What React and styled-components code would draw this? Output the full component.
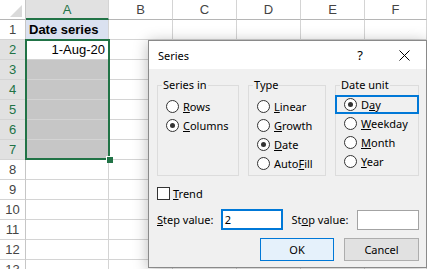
import React from 'react';
import styled, { createGlobalStyle, css } from 'styled-components';

const GlobalStyle = createGlobalStyle`
  html, body { margin: 0; padding: 0; background: #fff; }
  body { font-family: "Liberation Sans", Arial, sans-serif; overflow: hidden; }
  * { box-sizing: border-box; }
`;

const GREEN = '#217346';
const GRID = '#d4d4d4';

const Page = styled.div`
  position: relative;
  width: 427px;
  height: 269px;
  overflow: hidden;
  background: #fff;
`;

const Sheet = styled.div`
  display: grid;
  grid-template-columns: 26px 83px 64px 64px 64px 64px 62px;
  grid-template-rows: repeat(14, 20px);
  font-family: "Liberation Sans", Arial, sans-serif;
  font-size: 13px;
`;

const Corner = styled.div`
  border-right: 1px solid #c6c6c6;
  border-bottom: 1px solid #b5b5b5;
  display: flex;
  align-items: flex-end;
  justify-content: flex-end;
  padding: 0 3px 2px 0;
`;

const ColHead = styled.div`
  display: flex;
  align-items: center;
  justify-content: center;
  color: #444;
  background: #fff;
  border-right: 1px solid ${GRID};
  border-bottom: 1px solid #b5b5b5;
  ${(p) =>
    p.$selected &&
    css`
      background: #e1e1e1;
      color: ${GREEN};
      border-bottom: 2px solid ${GREEN};
      padding-top: 1px;
    `}
`;

const RowHead = styled.div`
  display: flex;
  align-items: center;
  justify-content: center;
  color: #444;
  background: #fff;
  border-right: 1px solid #c6c6c6;
  border-bottom: 1px solid ${GRID};
  ${(p) =>
    p.$selected &&
    css`
      background: #e1e1e1;
      color: ${GREEN};
    `}
`;

const Cell = styled.div`
  display: flex;
  align-items: center;
  justify-content: ${(p) => (p.$align === 'right' ? 'flex-end' : 'flex-start')};
  padding: 0 3px;
  white-space: nowrap;
  overflow: visible;
  color: #000;
  font-weight: ${(p) => (p.$bold ? 700 : 400)};
  background: ${(p) => p.$bg || '#fff'};
  border-right: 1px solid ${GRID};
  border-bottom: 1px solid ${GRID};
`;

const Selection = styled.div`
  position: absolute;
  left: 25px;
  top: 39px;
  width: 85px;
  height: 121px;
  border: 2px solid ${GREEN};
  pointer-events: none;
`;

const FillHandle = styled.div`
  position: absolute;
  right: -5px;
  bottom: -5px;
  width: 7px;
  height: 7px;
  background: ${GREEN};
  border-left: 1px solid #fff;
  border-top: 1px solid #fff;
`;

/* ---------- Dialog ---------- */

const Dialog = styled.div`
  position: absolute;
  left: 148px;
  top: 40px;
  width: 279px;
  height: 228px;
  border: 1px solid #8a8a8a;
  background: #f0f0f0;
  box-shadow: 0 2px 14px rgba(0, 0, 0, 0.28);
  display: flex;
  flex-direction: column;
  font-family: "Noto Sans", "Open Sans", sans-serif;
  font-size: 11px;
  color: #000;
`;

const TitleBar = styled.div`
  height: 28px;
  background: #fff;
  display: flex;
  align-items: center;
  padding-left: 9px;
  flex-shrink: 0;
`;

const Title = styled.span`
  flex: 1;
  font-size: 11px;
`;

const TitleButton = styled.span`
  width: 44px;
  height: 28px;
  display: flex;
  align-items: center;
  justify-content: center;
  font-size: 13px;
`;

const Body = styled.div`
  flex: 1;
  display: flex;
  flex-direction: column;
  padding: 0 7px 0 8px;
`;

const GroupsRow = styled.div`
  display: flex;
  gap: 9px;
  margin-top: 16px;
`;

const Group = styled.div`
  position: relative;
  width: ${(p) => p.$w}px;
  height: 91px;
  border: 1px solid #dcdcdc;
  padding-top: ${(p) => p.$pt}px;
  display: flex;
  flex-direction: column;
`;

const Legend = styled.span`
  position: absolute;
  top: -9px;
  left: 4px;
  padding: 0 1px;
  line-height: 16px;
  background: #f0f0f0;
`;

const OptionRow = styled.div`
  height: 19px;
  display: flex;
  align-items: center;
  gap: 4px;
  padding-left: 8px;
  white-space: nowrap;
  ${(p) =>
    p.$focused &&
    css`
      margin: 0 -1px;
      border: 2px solid #0078d7;
      padding-left: 7px;
    `}
`;

const RadioCircle = styled.span`
  width: 13px;
  height: 13px;
  border: 1px solid #333;
  border-radius: 50%;
  background: #fff;
  flex-shrink: 0;
  display: flex;
  align-items: center;
  justify-content: center;
  &::after {
    content: '';
    width: 5px;
    height: 5px;
    border-radius: 50%;
    background: #333;
    display: ${(p) => (p.$checked ? 'block' : 'none')};
  }
`;

const CheckRow = styled.div`
  display: flex;
  align-items: center;
  gap: 3px;
  height: 15px;
  margin-top: 10px;
`;

const CheckBox = styled.span`
  width: 13px;
  height: 13px;
  border: 1px solid #333;
  background: #fff;
  flex-shrink: 0;
`;

const ValueRow = styled.div`
  display: flex;
  align-items: center;
  margin-top: 8px;
  height: 21px;
`;

const ValueLabel = styled.span`
  width: ${(p) => p.$w}px;
  margin-left: ${(p) => p.$ml || 0}px;
  white-space: nowrap;
`;

const ValueInput = styled.div`
  width: 62px;
  height: 21px;
  background: #fff;
  display: flex;
  align-items: center;
  ${(p) =>
    p.$focused
      ? css`
          border: 2px solid #0078d7;
          padding-left: 2px;
        `
      : css`
          border: 1px solid #a3a3a3;
          height: 20px;
          padding-left: 3px;
        `}
`;

const ButtonRow = styled.div`
  display: flex;
  justify-content: flex-end;
  gap: 10px;
  margin-top: 8px;
`;

const Button = styled.div`
  width: ${(p) => p.$w}px;
  height: 23px;
  display: flex;
  align-items: center;
  justify-content: center;
  border: 1px solid ${(p) => (p.$default ? '#0078d7' : '#adadad')};
  background: ${(p) => (p.$default ? '#e5f1fb' : '#e1e1e1')};
`;

const Radio = ({ checked, focused, children }) => (
  <OptionRow $focused={focused}>
    <RadioCircle $checked={checked} />
    <span>{children}</span>
  </OptionRow>
);

const columns = ['A', 'B', 'C', 'D', 'E', 'F'];

export default function App() {
  const rows = [];
  for (let r = 1; r <= 13; r++) {
    const sel = r >= 2 && r <= 7;
    rows.push(
      <RowHead key={`h${r}`} $selected={sel}>
        {r}
      </RowHead>
    );
    columns.forEach((c) => {
      let content = null;
      let bg;
      let bold = false;
      let align = 'left';
      if (c === 'A') {
        if (r === 1) {
          content = 'Date series';
          bg = '#dae1f0';
          bold = true;
        } else if (r === 2) {
          content = '1-Aug-20';
          align = 'right';
        } else if (sel) {
          bg = '#c6c6c6';
        }
      }
      rows.push(
        <Cell key={`${c}${r}`} $bg={bg} $bold={bold} $align={align}>
          {content}
        </Cell>
      );
    });
  }

  return (
    <Page>
      <GlobalStyle />
      <Sheet>
        <Corner>
          <svg width="12" height="12" viewBox="0 0 12 12">
            <polygon points="12,0 12,12 0,12" fill="#dadada" />
          </svg>
        </Corner>
        {columns.map((c) => (
          <ColHead key={c} $selected={c === 'A'}>
            {c}
          </ColHead>
        ))}
        {rows}
      </Sheet>
      <Selection>
        <FillHandle />
      </Selection>

      <Dialog>
        <TitleBar>
          <Title>Series</Title>
          <TitleButton>?</TitleButton>
          <TitleButton>
            <svg width="11" height="11" viewBox="0 0 11 11">
              <path d="M0.5 0.5 L10.5 10.5 M10.5 0.5 L0.5 10.5" stroke="#000" strokeWidth="1" />
            </svg>
          </TitleButton>
        </TitleBar>
        <Body>
          <GroupsRow>
            <Group $w={82} $pt={11}>
              <Legend>Series in</Legend>
              <Radio>
                <u>R</u>ows
              </Radio>
              <Radio checked>
                <u>C</u>olumns
              </Radio>
            </Group>
            <Group $w={78} $pt={11}>
              <Legend>Type</Legend>
              <Radio>
                <u>L</u>inear
              </Radio>
              <Radio>
                <u>G</u>rowth
              </Radio>
              <Radio checked>
                <u>D</u>ate
              </Radio>
              <Radio>
                Auto<u>F</u>ill
              </Radio>
            </Group>
            <Group $w={84} $pt={9}>
              <Legend>Date unit</Legend>
              <Radio checked focused>
                D<u>a</u>y
              </Radio>
              <Radio>
                <u>W</u>eekday
              </Radio>
              <Radio>
                <u>M</u>onth
              </Radio>
              <Radio>
                <u>Y</u>ear
              </Radio>
            </Group>
          </GroupsRow>
          <CheckRow>
            <CheckBox />
            <span>
              <u>T</u>rend
            </span>
          </CheckRow>
          <ValueRow>
            <ValueLabel $w={64}>
              <u>S</u>tep value:
            </ValueLabel>
            <ValueInput $focused>2</ValueInput>
            <ValueLabel $w={66} $ml={9}>
              St<u>o</u>p value:
            </ValueLabel>
            <ValueInput />
          </ValueRow>
          <ButtonRow>
            <Button $w={74} $default>
              OK
            </Button>
            <Button $w={75}>Cancel</Button>
          </ButtonRow>
        </Body>
      </Dialog>
    </Page>
  );
}
